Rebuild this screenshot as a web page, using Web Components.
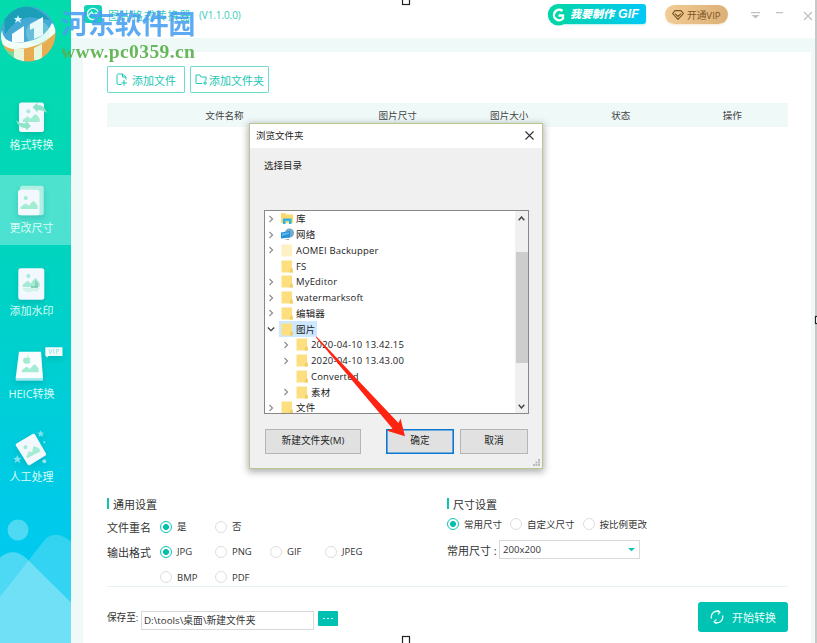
<!DOCTYPE html>
<html lang="zh-CN">
<head>
<meta charset="utf-8">
<title>图片格式转换器</title>
<style>
  html, body { margin: 0; height: 100%; overflow: hidden; }
  body {
    font-family: "Open Sans", "Noto Sans CJK SC", sans-serif;
    color: #333;
    background: #fff;
  }
</style>
</head>
<body>
<converter-app></converter-app>

<script>
// Small helper: every component renders its markup in an open shadow root
class BaseElement extends HTMLElement {
  constructor() {
    super();
    this.attachShadow({ mode: 'open' });
  }
  connectedCallback() {
    this.shadowRoot.innerHTML = `<style>* { box-sizing: border-box; }</style>` + this.render();
  }
}

// Sidebar icons, drawn on a 71x44 area
const hills = (x, y, w = 17, h = 8) => `
  <path transform="translate(${x} ${y}) scale(${w / 17} ${h / 8})" fill="#a3ecd3"
    d="M0 8V6L4.2 2.8Q5.2 2.2 6 3L8 4.8L11.6 .7Q12.8-.4 14 .8L17 4.5V8Z"/>`;

const navIcons = {
  format: `
    <rect x="19" y="10.5" width="25" height="29.5" rx="2.5" fill="#f2f8fe"/>
    <circle cx="28.3" cy="19.3" r="2" fill="#a3ecd3"/>${hills(22.7, 22)}
    <path d="M32.5 15L37.5 10.7V13Q44 12.5 47 21Q42.500 17.500 37.500 18V20.500Z" fill="#8fe3c8"/>
    <path d="M31 34L26 38.500V36Q19 36.500 16 28.500Q20.500 32 26 31V28.700Z" fill="#8fe3c8"/>`,
  resize: `
    <rect x="20" y="10.7" width="23.700" height="29.500" rx="2.5" fill="#b0efe2"/>
    <rect x="18" y="14.700" width="21.500" height="25.600" rx="2.5" fill="#f2f8fe"/>
    <circle cx="25.700" cy="23" r="2" fill="#a3ecd3"/>${hills(20.7, 26)}`,
  watermark: `
    <rect x="18.300" y="10.300" width="26" height="31.400" rx="2.500" fill="#f2f8fe"/>
    <circle cx="28.300" cy="18" r="2" fill="#a3ecd3"/>${hills(22.7, 20, 17, 9)}
    <path d="M35 22L38 25V30H31V28H35Z" fill="#84d3b9"/>
    <path d="M23 30H40L37 34Q33 32 31 34Q28 35 23 32Z" fill="#d3f3ea"/>`,
  heic: `
    <path d="M15.700 36H43V39.700H15.700Z" fill="#a4e9ef"/>
    <path d="M19 10.700H41L43 37H15.700Z" fill="#fafdff"/>
    <path d="M27 16Q27 14.500 28.500 14Q28.500 16 27 16ZM26.500 17Q29 15.500 30.300 17.500Q28.700 19 30.500 20.700Q29 24 26.700 22.500Q24 23.500 23 20Q23 15.500 26.500 17Z" fill="#a3ecd3"/>
    ${hills(21.7, 23.3)}
    <path d="M45.300 6.300H62.500V15H48.500L46.500 17V15H45.300Z" fill="#f2fbfb"/>
    <text x="48.500" y="13.200" font-size="6.500" textLength="11" fill="#8bdcdc">VIP</text>`,
  manual: `
    <path d="M16.500 19.500L33 9.800Q34.300 9.300 35 10.500L46 29.500Q46.500 31 45.500 31.600L29.700 41.200Q28.500 41.700 27.800 40.700L15.800 21.500Q15.300 20.300 16.500 19.500Z" fill="#f2f8fe"/>
    <g transform="rotate(-28 32 26)"><circle cx="27.500" cy="20.500" r="2" fill="#a3ecd3"/>${hills(24, 23.5, 15, 7.5)}</g>
    <path d="M40.700 6.200L41.700 8.500L44.200 8.700L42.300 10.300L43 12.800L40.700 11.400L38.500 12.800L39.200 10.300L37.300 8.700L39.700 8.500Z" fill="#7fe3ee"/>
    <path d="M17.300 31L18.500 33.700L21.500 34L19.200 36L20 39L17.300 37.300L14.700 39L15.500 36L13.200 34L16.200 33.700Z" fill="#7fe3ee"/>
    <circle cx="44.300" cy="37.300" r="2" fill="#8fe8f0"/><circle cx="44.300" cy="18.300" r="1" fill="#8fe8f0"/>`
};

class NavItem extends BaseElement {
  render() {
    return `
      <style>
        :host { display: flex; flex-direction: column; height: 70px; flex: none; }
        :host([active]) { background: rgba(255, 255, 255, .3); }
        svg { display: block; flex: none; overflow: visible; filter: drop-shadow(0 3px 3px rgba(0, 100, 100, .22)); }
        span { font-size: 11px; line-height: 16px; width: 63px; text-align: center; color: #d9fbf5; white-space: nowrap; }
      </style>
      <svg width="71" height="45">${navIcons[this.getAttribute('icon')]}</svg>
      <span><slot></slot></span>`;
  }
}

class SideBar extends BaseElement {
  render() {
    return `
      <style>
        :host {
          display: flex;
          flex-direction: column;
          justify-content: space-between;
          width: 71px;
          flex: none;
          background: linear-gradient(#04dbad 0, #03d8b4 130px, #00d4c0 260px, #00cfd2 370px, #00cbe6 490px, #00c9f0 560px);
        }
        nav { display: flex; flex-direction: column; gap: 13px; padding-top: 92px; }
        .scene { display: block; }
      </style>
      <nav>
        <nav-item icon="format">格式转换</nav-item>
        <nav-item icon="resize" active>更改尺寸</nav-item>
        <nav-item icon="watermark">添加水印</nav-item>
        <nav-item icon="heic">HEIC转换</nav-item>
        <nav-item icon="manual">人工处理</nav-item>
      </nav>
      <svg class="scene" width="71" height="143" fill="#fff">
        <circle cx="18" cy="30" r="10.500" fill-opacity=".3"/>
        <path d="M0 97L43 42Q54 28 71 41.500V143H0Z" fill-opacity=".2"/>
        <path d="M0 57.500Q13 47 26 58L71 102.500V143H0Z" fill-opacity=".3"/>
      </svg>`;
  }
}

class TitleBar extends BaseElement {
  render() {
    return `
      <style>
        :host { display: flex; height: 38px; background: #fff; padding: 4px 0 0 13px; }
        .logo { margin-top: 1px; flex: none; }
        .name { margin: 5px 0 0 6px; width: 84px; font-size: 11px; line-height: 13px; letter-spacing: .9px; color: #35cdb9; white-space: nowrap; }
        .version { margin: 5px 0 0 7px; width: 50px; font-size: 10px; line-height: 13px; color: #35cdb9; letter-spacing: -.1px; }
        .gif {
          display: flex; align-items: center; position: relative;
          margin: 0 0 0 auto; width: 98px; height: 20px; border-radius: 10px 3px 3px 10px;
          background: linear-gradient(90deg, #00d6a5, #02c8f5);
          font-size: 11px; font-weight: 900; font-style: italic; color: #fff; white-space: nowrap;
          box-shadow: 0 1px 2px rgba(0, 200, 190, .3);
        }
        .gif svg { flex: none; margin-top: 1px; }
        .gif span { margin-left: 1px; line-height: 20px; }
        .gif b { font: italic 900 12.500px "Liberation Sans"; margin-left: 4px; }
        .vip {
          display: flex; align-items: center; gap: 3px;
          margin: 1px 0 0 19px; padding-left: 7px; width: 63px; height: 19px; border-radius: 10px;
          background: linear-gradient(90deg, #f2cc95, #dbb076);
          font-size: 9.700px; color: #7a5424; white-space: nowrap;
          box-shadow: 0 1px 2px rgba(220, 180, 120, .3);
        }
        .win { margin-left: 22px; width: 65px; flex: none; }
      </style>
      <svg class="logo" width="18" height="18">
        <rect width="18" height="18" rx="3" fill="#12d2b8"/>
        <circle cx="9" cy="9" r="5.600" fill="none" stroke="#d9fff6" stroke-width="1.400"/>
        <path d="M4 11L7.500 7L10 10L12 8L14.500 11" fill="none" stroke="#d9fff6" stroke-width="1.300"/>
      </svg>
      <div class="name">图片格式转换器</div>
      <div class="version">(V1.1.0.0)</div>
      <div class="gif">
        <svg width="21" height="22">
          <circle cx="10.500" cy="11" r="10.500" fill="#00d6a9"/>
          <path d="M14.500 7A5.200 5.200 0 1 0 15 14.500V11.500H10.500" fill="none" stroke="#fff" stroke-width="2.400"/>
        </svg>
        <span>我要制作<b>GIF</b></span>
      </div>
      <div class="vip">
        <svg width="12" height="10" fill="none" stroke="#7a5424" stroke-width="1.100">
          <path d="M3 .6H9L11.400 3.700L6 9.400L.6 3.700ZM3 3.700L6 6.500L9 3.700"/>
        </svg>
        <span>开通VIP</span>
      </div>
      <svg class="win" width="65" height="20" fill="none" stroke="#c2c2c2" stroke-width="1.300">
        <path d="M1 8.600H10M26 8.600H33"/>
        <path d="M1.500 11H9.500L5.500 14.500Z" fill="#c2c2c2" stroke="none"/>
        <path d="M54 8L62 16M62 8L54 16"/>
      </svg>`;
  }
}

class OutlineButton extends BaseElement {
  render() {
    const icon = this.getAttribute('icon') === 'file'
      ? `<path d="M5.500 11.500H2.500Q1 11.500 1 10V2.500Q1 1 2.500 1H6.500L10 4V6.500M6.500 1V4H10M8 7V12.500M5.500 10H11"/>`
      : `<path d="M7 10.500H1.500Q1 10.500 1 10V2H5L6 4H11V7.500M10 7.500V12M8 10H12"/>`;
    return `
      <style>
        :host {
          display: flex; align-items: center; justify-content: center; gap: var(--icon-gap, 4px);
          height: 27px; border: 1px solid #6fdccd; border-radius: 1px;
          color: #1cc6b4; font-size: 11px; white-space: nowrap; box-sizing: border-box;
        }
      </style>
      <svg width="12" height="13" fill="none" stroke="#1cc6b4" stroke-width="1">${icon}</svg>
      <span><slot></slot></span>`;
  }
}

class FileTable extends BaseElement {
  render() {
    const columns = ['文件名称', '图片尺寸', '图片大小', '状态', '操作'];
    return `
      <style>
        :host { display: grid; grid-template-columns: 235px repeat(4, 1fr); height: 24px; background: #eff9f8; font-size: 9.600px; line-height: 25px; text-align: center; color: #444; }
      </style>
      ${columns.map(c => `<span>${c}</span>`).join('')}`;
  }
}

class RadioOption extends BaseElement {
  render() {
    return `
      <style>
        :host { display: flex; align-items: center; gap: 5px; font-size: 9.500px; line-height: 14px; white-space: nowrap; }
        i { width: 12px; height: 12px; flex: none; border: 1px solid #dedede; border-radius: 50%; background: #fff; }
        span { padding-top: 1px; }
        :host([checked]) i { border-color: #0fc4b3; background: radial-gradient(circle, #00bfae 2.600px, #fff 3.300px); }
      </style>
      <i></i><span><slot></slot></span>`;
  }
}

class SectionTitle extends BaseElement {
  render() {
    return `
      <style>
        :host { display: flex; align-items: center; gap: 4px; height: 14px; font-size: 11px; line-height: 14px; }
        i { width: 2px; height: 11px; background: #0fc4b3; margin-top: -3px; }
      </style>
      <i></i><slot></slot>`;
  }
}

class GeneralSettings extends BaseElement {
  render() {
    return `
      <style>
        :host { display: block; }
        .row { display: grid; grid-template-columns: 53px repeat(4, 55px); align-items: center; height: 25.300px; font-size: 11px; white-space: nowrap; }
        .row:first-of-type { margin-top: 2px; }
      </style>
      <section-title>通用设置</section-title>
      <div class="row"><span>文件重名</span><radio-option checked>是</radio-option><radio-option>否</radio-option></div>
      <div class="row"><span>输出格式</span><radio-option checked>JPG</radio-option><radio-option>PNG</radio-option><radio-option>GIF</radio-option><radio-option>JPEG</radio-option></div>
      <div class="row"><span></span><radio-option>BMP</radio-option><radio-option>PDF</radio-option></div>`;
  }
}

class SizeSettings extends BaseElement {
  render() {
    return `
      <style>
        :host { display: block; }
        .modes { display: flex; gap: 8px; height: 14px; margin-top: 5px; }
        .size { display: flex; align-items: center; margin-top: 9px; font-size: 11px; white-space: nowrap; }
        label { width: 52px; }
        .select { display: flex; align-items: center; justify-content: space-between; width: 141px; height: 19px; padding: 0 4px 0 3px; border: 1px solid #d9d9d9; font-size: 9.600px; }
      </style>
      <section-title>尺寸设置</section-title>
      <div class="modes">
        <radio-option checked>常用尺寸</radio-option>
        <radio-option>自定义尺寸</radio-option>
        <radio-option>按比例更改</radio-option>
      </div>
      <div class="size">
        <label>常用尺寸 :</label>
        <div class="select">200x200<svg width="7" height="4"><path d="M0 0H7L3.500 3.300Z" fill="#0fc4b3"/></svg></div>
      </div>`;
  }
}

class SaveBar extends BaseElement {
  render() {
    return `
      <style>
        :host { display: flex; align-items: flex-start; height: 56px; font-size: 10px; white-space: nowrap; }
        label { width: 34px; margin-top: 23px; line-height: 16px; font-size: 9.700px; letter-spacing: -.1px; }
        .path { width: 173px; height: 19px; margin-top: 24px; border: 1px solid #d9d9d9; padding-left: 2px; line-height: 17px; font-size: 9.800px; }
        .more { display: flex; align-items: center; justify-content: center; gap: 2px; width: 20px; height: 15px; margin: 24px 0 0 4px; border-radius: 1px; background: #00c0b1; }
        .more i { width: 2px; height: 1px; background: #d5f6f2; }
        .start { display: flex; align-items: center; gap: 8px; width: 90px; height: 30px; margin: 15px 0 0 auto; padding-left: 12px; border-radius: 3px; background: #00c3b3; color: #e9fffb; font-size: 11px; }
      </style>
      <label>保存至:</label>
      <div class="path">D:\\tools\\桌面\\新建文件夹</div>
      <div class="more"><i></i><i></i><i></i></div>
      <div class="start">
        <svg width="14" height="14" fill="none" stroke="#e9fffb" stroke-width="1.300">
          <path d="M1.500 8.500A5.600 5.600 0 0 1 9.500 2M12.500 5.500A5.600 5.600 0 0 1 4.500 12"/>
          <path d="M7.500 0L10 2.200L8 4.500M6.500 9.500L4 11.800L6.500 14" stroke-width="1.100"/>
        </svg>
        开始转换
      </div>`;
  }
}

// One row of the folder tree
class TreeRow extends BaseElement {
  render() {
    const folder = (fill) => `
      <path d="M.5 .5H11V10.500H12V12.500H.5Z" fill="${fill}"/>
      <path d="M9.500 8.500H12V12.500H8.500Z" fill="#e9bd4c" fill-opacity=".55"/>`;
    const icons = {
      folder: folder('#fddf80'),
      pale: `<path d="M.5 .5H11V12.500H.5Z" fill="#fdf0c4"/>`,
      library: `<path d="M0 1H4L5 2.500H12V11H0Z" fill="#fcd96c"/><path d="M2 12V6.500H10.500V12H8V9H4.500V12Z" fill="#29b7ea"/>`,
      network: `<circle cx="8.500" cy="5" r="4.500" fill="#74a9c8"/><path d="M0 4.500L9 3V9.500L0 10.500Z" fill="#2591d8"/><path d="M1 5.500L8 4.200V6L1 8Z" fill="#59b8ef"/><path d="M3 12L8 10.800V12Z" fill="#87a9bb"/>`
    };
    const state = this.getAttribute('state');
    const arrow = state === 'open'
      ? `<path d="M.800 3.500L4 6.700L7.200 3.500" stroke="#444"/>`
      : state === 'closed' ? `<path d="M2.500 2L5.500 5L2.500 8" stroke="#929292"/>` : '';
    return `
      <style>
        :host { display: flex; align-items: center; height: 15.750px; padding-left: calc(2px + var(--level, 0) * 15px); font-size: 9.500px; line-height: 15px; letter-spacing: .18px; white-space: nowrap; color: #222; box-sizing: border-box; }
        .label { display: flex; align-items: center; gap: 3px; height: 100%; padding: 0 2px; margin-left: 4px; }
        :host([selected]) .label { background: #cde8ff; }
        svg { flex: none; overflow: visible; }
      </style>
      <svg width="8" height="10" fill="none" stroke-width="1.300">${arrow}</svg>
      <div class="label"><svg width="12" height="13">${icons[this.getAttribute('icon') || 'folder']}</svg><span><slot></slot></span></div>`;
  }
}

class DialogButton extends BaseElement {
  render() {
    return `
      <style>
        :host { display: flex; align-items: center; justify-content: center; height: 25px; border: 1px solid #b5b5b5; background: #e1e1e1; color: #222; font-size: 9.700px; line-height: 14px; padding-bottom: 2px; white-space: nowrap; box-sizing: border-box; }
        :host([primary]) { border-color: #0a78d4; box-shadow: inset 0 0 0 .6px #0a78d4; }
      </style>
      <slot></slot>`;
  }
}

class FolderDialog extends BaseElement {
  render() {
    return `
      <style>
        :host { display: flex; flex-direction: column; width: 294px; height: 346px; border: 1px solid #b7c895; background: #f0f0f0; box-shadow: 0 2px 7px 1px rgba(0, 0, 0, .32); box-sizing: border-box; color: #222; font-size: 9.500px; }
        header { display: flex; align-items: center; justify-content: space-between; height: 24px; flex: none; padding: 0 8px 2px 6px; background: #fff; }
        .hint { margin: 9px 0 0 14px; line-height: 18px; height: 53px; }
        .tree { display: flex; width: 265px; height: 204px; margin-left: 14px; border: 1px solid #888; background: #fff; overflow: hidden; }
        .rows { flex: 1; overflow: hidden; }
        .bar { display: flex; flex-direction: column; align-items: center; width: 13px; background: #f0f0f0; padding: 5px 0 4px; }
        .bar i { width: 12px; height: 111px; background: #cdcdcd; margin: 31px 0 auto; }
        .buttons { display: grid; grid-template-columns: 96px 68px 68px; justify-content: start; column-gap: 6px; margin: 15px 0 0 15px; }
        .buttons dialog-button:first-child { width: 96px; }
        .buttons { grid-template-columns: 115px 68px 68px; }
        .grip { margin: auto 2px 2px auto; }
      </style>
      <header><span>浏览文件夹</span><svg width="9" height="9" stroke="#333" stroke-width="1.100"><path d="M.5 .5L8.500 8.500M8.500 .5L.5 8.500"/></svg></header>
      <div class="hint">选择目录</div>
      <div class="tree">
        <div class="rows"><slot></slot></div>
        <div class="bar">
          <svg width="7" height="5" fill="none" stroke="#444" stroke-width="1.400"><path d="M.7 4.300L3.500 1L6.300 4.300"/></svg>
          <i></i>
          <svg width="7" height="5" fill="none" stroke="#444" stroke-width="1.400"><path d="M.7 .7L3.500 4L6.300 .7"/></svg>
        </div>
      </div>
      <div class="buttons">
        <dialog-button>新建文件夹(M)</dialog-button>
        <dialog-button primary>确定</dialog-button>
        <dialog-button>取消</dialog-button>
      </div>
      <svg class="grip" width="7" height="7" fill="#bcbcbc"><path d="M5 0H7V2H5ZM2.500 2.500H4.500V4.500H2.500ZM5 2.500H7V4.500H5ZM0 5H2V7H0ZM2.500 5H4.500V7H2.500ZM5 5H7V7H5Z"/></svg>`;
  }
}

// Site stamp laid over the top left corner
class SiteStamp extends BaseElement {
  render() {
    return `
      <style>
        :host { display: flex; gap: 5px; white-space: nowrap; pointer-events: none; }
        .cn { font: 700 26.900px/30px "Noto Sans CJK SC", sans-serif; color: #469ff0; opacity: .88; margin-top: 2px; }
        .url { font: bold 19.500px/20px "Liberation Serif", serif; color: #58b04b; opacity: .9; margin-top: 4px; letter-spacing: .42px; }
      </style>
      <svg width="56" height="56">
        <defs><clipPath id="disc"><circle cx="28" cy="28" r="27.500"/></clipPath></defs>
        <g clip-path="url(#disc)">
          <rect width="56" height="56" fill="#45a9d6"/>
          <path d="M4 8Q28-10 50 14Q44 13 36 12Q20 8 5 28Z" fill="#1b9fb8"/>
          <path d="M0 34Q25 49 56 21V56H0Z" fill="#e8ad50"/>
          <path d="M0 34Q8 49 14 45V56H0Z" fill="#78d99d"/>
          <path d="M2 24Q3 39 25 36Q45 33 52 17Q60 24 53 29Q36 44 12 43Q-3 40 2 24Z" fill="#f2fff7"/>
          <path d="M12 28L24 20V36L12 37ZM32 17L43 11V29L34 33V22L30 24V18Z" fill="#f6fdff"/>
          <path d="M14 43H24V56H14ZM34 42L42 38V54H34Z" fill="#e7f7dd"/>
          <path d="M18 9L19 12L22 12L20 14L21 17L18 15L15 17L16 14L14 12L17 12Z" fill="#ddf8ff"/>
          <circle cx="38" cy="27" r="12" fill="#b8f2e8" fill-opacity=".3"/>
        </g>
      </svg>
      <div><div class="cn">河东软件园</div><div class="url">www.pc0359.cn</div></div>`;
  }
}

class ConverterApp extends BaseElement {
  render() {
    return `
      <style>
        :host { display: flex; position: relative; width: 817px; height: 643px; overflow: hidden; }
        .window { display: flex; flex-direction: column; flex: 1; min-width: 0; border-right: 2px solid #c8c8c8; background: #eff9f8; }
        main { display: flex; flex-direction: column; flex: 1; margin: 14px 4px 0 12px; padding: 14px 23px 0 24px; background: #fff; }
        .actions { display: flex; gap: 5px; margin-bottom: 10px; }
        .actions outline-button { width: 78px; }
        .actions outline-button:last-child { --icon-gap: 2px; width: 79px; }
        .settings { display: grid; grid-template-columns: 340px 1fr; height: 89px; border-bottom: 1px solid #e5f5f4; margin-top: auto; }
        /* Overlays */
        folder-dialog { position: absolute; left: 249px; top: 123px; }
        site-stamp { position: absolute; left: 0; top: 6px; }
        .pointer { position: absolute; left: 0; top: 0; }
        .child { --level: 1; }
      </style>
      <side-bar></side-bar>
      <div class="window">
        <title-bar></title-bar>
        <main>
          <div class="actions">
            <outline-button icon="file">添加文件</outline-button>
            <outline-button icon="folder">添加文件夹</outline-button>
          </div>
          <file-table></file-table>
          <div class="settings">
            <general-settings></general-settings>
            <size-settings></size-settings>
          </div>
          <save-bar></save-bar>
        </main>
      </div>
      <folder-dialog>
        <tree-row state="closed" icon="library">库</tree-row>
        <tree-row state="closed" icon="network">网络</tree-row>
        <tree-row state="closed" icon="pale">AOMEI Backupper</tree-row>
        <tree-row>FS</tree-row>
        <tree-row state="closed">MyEditor</tree-row>
        <tree-row state="closed">watermarksoft</tree-row>
        <tree-row state="closed">编辑器</tree-row>
        <tree-row state="open" selected>图片</tree-row>
        <tree-row class="child" state="closed">2020-04-10 13.42.15</tree-row>
        <tree-row class="child" state="closed">2020-04-10 13.43.00</tree-row>
        <tree-row class="child">Converted</tree-row>
        <tree-row class="child" state="closed">素材</tree-row>
        <tree-row state="closed">文件</tree-row>
      </folder-dialog>
      <site-stamp></site-stamp>
      <svg class="pointer" width="817" height="643">
        <path d="M316.500 336.500L398.500 423L400.500 418.500L405 436.300L387 430.700L392.500 428.500L316 337.500Z" fill="#ff2412"/>
        <g fill="#fff" stroke="#222" stroke-width="1.200">
          <rect x="402.500" y="-3.500" width="7" height="8"/>
          <rect x="402.500" y="636.500" width="7" height="8"/>
          <rect x="815.500" y="316.500" width="7" height="7"/>
        </g>
      </svg>`;
  }
}

customElements.define('nav-item', NavItem);
customElements.define('side-bar', SideBar);
customElements.define('title-bar', TitleBar);
customElements.define('outline-button', OutlineButton);
customElements.define('file-table', FileTable);
customElements.define('radio-option', RadioOption);
customElements.define('section-title', SectionTitle);
customElements.define('general-settings', GeneralSettings);
customElements.define('size-settings', SizeSettings);
customElements.define('save-bar', SaveBar);
customElements.define('tree-row', TreeRow);
customElements.define('dialog-button', DialogButton);
customElements.define('folder-dialog', FolderDialog);
customElements.define('site-stamp', SiteStamp);
customElements.define('converter-app', ConverterApp);
</script>
</body>
</html>
